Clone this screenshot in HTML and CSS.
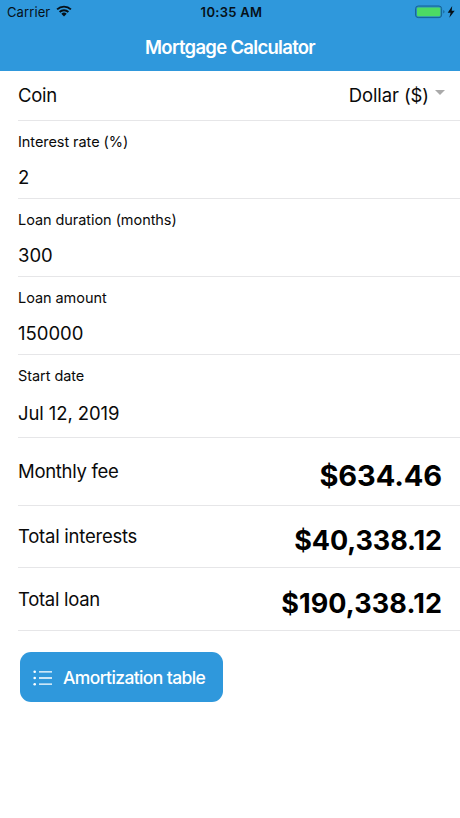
FILE: index.html
```html
<!DOCTYPE html>
<html lang="en">
<head>
<meta charset="utf-8">
<title>Mortgage Calculator</title>
<link rel="stylesheet" href="styles.css">
</head>
<body>
<header class="header">
  <div class="status">
    <div class="network"><span class="carrier">Carrier</span>
      <svg class="wifi" width="16" height="12" viewBox="0 0 16 12"><path d="M1.1 4.4a10 10 0 0 1 13.8 0M3.6 7a6.3 6.3 0 0 1 8.8 0" fill="none" stroke="#061018" stroke-width="1.9"/><path d="M5.3 8.7a3.9 3.9 0 0 1 5.4 0L8 11.4z" fill="#061018"/></svg>
    </div>
    <span class="time">10:35 AM</span>
    <div class="power">
      <svg width="40" height="14" viewBox="0 0 40 14"><rect x=".6" y="1" width="26" height="11.6" rx="2.6" fill="#2c8fc0" stroke="#176394" stroke-width="1"/><rect x="2" y="2.4" width="23.2" height="8.8" rx="1.2" fill="#4cda64"/><path d="M28.2 5.1q1.4.6 1.4 1.7t-1.4 1.7z" fill="#1b6b9f"/><path d="M37.2 1 32.7 7.7h2.9L34.3 12.8l5.4-7.1h-3z" fill="#061018"/></svg>
    </div>
  </div>
  <h1 class="title">Mortgage Calculator</h1>
</header>
<main class="form">
  <div class="row coin"><span class="label">Coin</span><span class="choice"><span>Dollar ($)</span><i class="caret"></i></span></div>
  <div class="row field"><span class="caption">Interest rate (%)</span><span class="value">2</span></div>
  <div class="row field"><span class="caption">Loan duration (months)</span><span class="value">300</span></div>
  <div class="row field"><span class="caption">Loan amount</span><span class="value">150000</span></div>
  <div class="row field date"><span class="caption">Start date</span><span class="value">Jul 12, 2019</span></div>
  <div class="row result fee"><span class="label">Monthly fee</span><strong class="amount">$634.46</strong></div>
  <div class="row result interests"><span class="label">Total interests</span><strong class="amount">$40,338.12</strong></div>
  <div class="row result loan"><span class="label">Total loan</span><strong class="amount">$190,338.12</strong></div>
</main>
<button class="button" type="button">
  <svg width="20" height="16" viewBox="0 0 20 16"><path d="M6 1.8h13M6 8h13M6 14.2h13" stroke="#fff" stroke-width="1.3"/><g fill="#fff"><circle cx="1.7" cy="1.8" r="1.3"/><circle cx="1.7" cy="8" r="1.3"/><circle cx="1.7" cy="14.2" r="1.3"/></g></svg>
  <span>Amortization table</span>
</button>
</body>
</html>
```
FILE: styles.css
```css
* { box-sizing: border-box; }
body {
  margin: 0;
  background: #fff;
  color: #0a0a0a;
  font-family: Inter, "Liberation Sans", sans-serif;
  font-size: 18.5px;
  line-height: 24px;
}
.header { height: 71px; background: #2f98dc; }
.status {
  display: grid;
  grid-template-columns: 1fr auto 1fr;
  height: 24px;
  padding: 0 5px 0 7px;
  align-items: center;
  color: #061018;
}
.network { display: flex; align-items: center; gap: 6px; }
.carrier { font-size: 13px; letter-spacing: .1px; }
.wifi { margin-top: -2px; }
.time { padding-left: 1px; font-size: 13px; font-weight: 600; letter-spacing: .3px; }
.power { display: flex; justify-content: flex-end; }
.title {
  margin: 0;
  padding-top: 11px;
  color: #fff;
  font-size: 18.5px;
  font-weight: 600;
  letter-spacing: -.7px;
  text-align: center;
}
.form { padding-left: 18px; }
.row { height: 78px; border-bottom: 1px solid #e6e6e8; }
.label { letter-spacing: -.3px; }
.coin { display: flex; justify-content: space-between; height: 50px; padding: 12px 15px 0 0; }
.choice { display: flex; gap: 6px; letter-spacing: -.1px; }
.caret {
  height: 0;
  margin-top: 7px;
  border: 5.5px solid transparent;
  border-top-color: #aaa;
  border-bottom: 0;
}
.field { display: flex; flex-direction: column; padding-top: 11px; }
.caption { font-size: 14.5px; line-height: 20px; letter-spacing: -.06px; }
.value { margin-top: 13px; }
.date { height: 83px; }
.date .value { margin-top: 15px; letter-spacing: -.1px; }
.result {
  display: flex;
  justify-content: space-between;
  height: 63px;
  padding: 18px 18px 0 0;
}
.fee { height: 68px; padding-top: 21px; }
.interests { height: 62px; }
.interests .label { letter-spacing: -.24px; }
.interests .amount { letter-spacing: -.1px; }
.loan { padding-top: 19px; }
.amount { padding-top: 1px; color: #000; font-size: 27px; font-weight: 700; line-height: 32px; }
.loan .amount { letter-spacing: .1px; }
.fee .amount { font-size: 29px; letter-spacing: -.1px; }
.button {
  display: flex;
  align-items: center;
  gap: 10px;
  width: 203px;
  height: 50px;
  margin: 21px 0 0 20px;
  padding: 1px 0 0 13px;
  border: 0;
  border-radius: 11px;
  background: #2f98dc;
  color: #fff;
  font: 500 17.5px/24px Inter, "Liberation Sans", sans-serif;
  letter-spacing: -.62px;
}
```
